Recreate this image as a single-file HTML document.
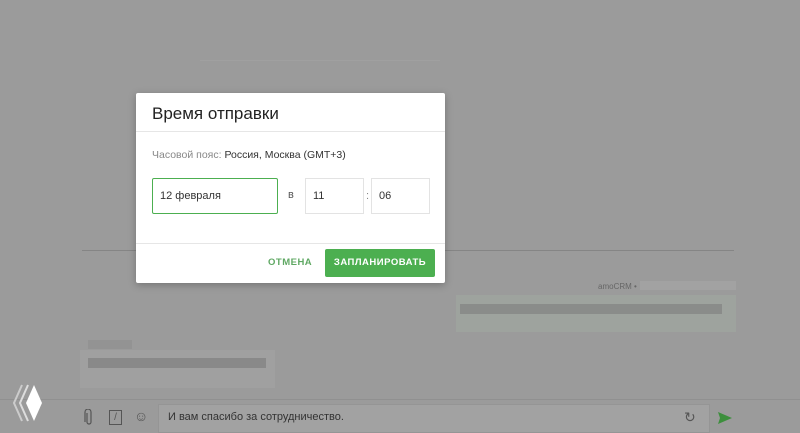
<!DOCTYPE html>
<html><head><meta charset="utf-8"><style>
body{margin:0;width:800px;height:431px;background:#9b9b9b;position:relative;overflow:hidden;font-family:"Liberation Sans",sans-serif}
.a{position:absolute}
</style></head><body>
<div class="a" style="left:200px;top:60px;width:240px;height:1px;background:#a0a0a0"></div>
<div class="a" style="left:82px;top:250px;width:652px;height:1px;background:#858585"></div>
<div class="a" style="left:598px;top:282px;font-size:8px;color:#666">amoCRM •</div>
<div class="a" style="left:640px;top:281px;width:96px;height:9px;background:#a2a2a2"></div>
<div class="a" style="left:456px;top:295px;width:280px;height:37px;background:#9ea39e"></div>
<div class="a" style="left:460px;top:304px;width:262px;height:10px;background:#8a8c8a"></div>
<div class="a" style="left:88px;top:340px;width:44px;height:9px;background:#939393"></div>
<div class="a" style="left:80px;top:350px;width:195px;height:38px;background:#a0a0a0"></div>
<div class="a" style="left:88px;top:358px;width:178px;height:10px;background:#898989"></div>
<div class="a" style="left:0;top:399px;width:800px;height:1px;background:#909090"></div>
<div class="a" style="left:158px;top:404px;width:550px;height:27px;background:#a2a2a2;border:1px solid #959595"></div>
<div class="a" style="left:168px;top:411px;font-size:11px;color:#333">И вам спасибо за сотрудничество.</div>
<svg class="a" style="left:84px;top:409px" width="10" height="17"><path d="M3 4V13a2 2 0 0 0 4 0V3a3 3 0 0 0-6 0v10" fill="none" stroke="#555" stroke-width="1.2"/></svg>
<div class="a" style="left:109px;top:410px;width:11px;height:13px;border:1px solid #555;font-size:10px;color:#555;text-align:center;line-height:13px">/</div>
<div class="a" style="left:134px;top:408px;font-size:14px;color:#555">☺</div>
<div class="a" style="left:684px;top:409px;font-size:14px;color:#555">↻</div>
<svg class="a" style="left:717px;top:411px" width="16" height="14"><path d="M1 1L15 7L1 13L3 7Z" fill="#3d8f3d"/></svg>
<svg class="a" style="left:12px;top:383px" width="32" height="40"><path d="M10 2L2 20L10 38" fill="none" stroke="#ccc" stroke-width="2"/><path d="M16 2L8 20L16 38" fill="none" stroke="#ddd" stroke-width="2"/><path d="M22 2L14 20L22 38L30 20Z" fill="#fff"/></svg>

<div class="a" style="left:136px;top:93px;width:309px;height:190px;background:#fff;border-radius:2px;box-shadow:0 2px 8px rgba(0,0,0,.25)">
<div class="a" style="left:16px;top:11px;font-size:17px;color:#222">Время отправки</div>
<div class="a" style="left:0;top:38px;width:309px;height:1px;background:#e6e6e6"></div>
<div class="a" style="left:16px;top:56px;font-size:10.5px;color:#888">Часовой пояс: <span style="color:#333">Россия, Москва (GMT+3)</span></div>
<div class="a" style="left:16px;top:85px;border:1px solid #4caf50;border-radius:2px;font-size:11px;color:#333;line-height:34px;padding-left:7px;box-sizing:border-box;width:126px;height:36px">12 февраля</div>
<div class="a" style="left:152px;top:96px;font-size:11px;color:#555">в</div>
<div class="a" style="left:169px;top:85px;width:59px;height:36px;border:1px solid #e3e3e3;box-sizing:border-box;font-size:11px;color:#333;line-height:34px;padding-left:7px">11</div>
<div class="a" style="left:230px;top:97px;font-size:11px;color:#888">:</div>
<div class="a" style="left:235px;top:85px;width:59px;height:36px;border:1px solid #e3e3e3;box-sizing:border-box;font-size:11px;color:#333;line-height:34px;padding-left:7px">06</div>
<div class="a" style="left:0;top:150px;width:309px;height:1px;background:#e6e6e6"></div>
<div class="a" style="left:132px;top:164px;font-size:9.5px;font-weight:bold;color:#5fa863;letter-spacing:.5px">ОТМЕНА</div>
<div class="a" style="left:189px;top:156px;width:110px;height:28px;background:#4caf50;border-radius:2px;color:#fff;font-size:9.5px;font-weight:bold;text-align:center;line-height:28px;letter-spacing:.5px">ЗАПЛАНИРОВАТЬ</div>
</div>
</body></html>
